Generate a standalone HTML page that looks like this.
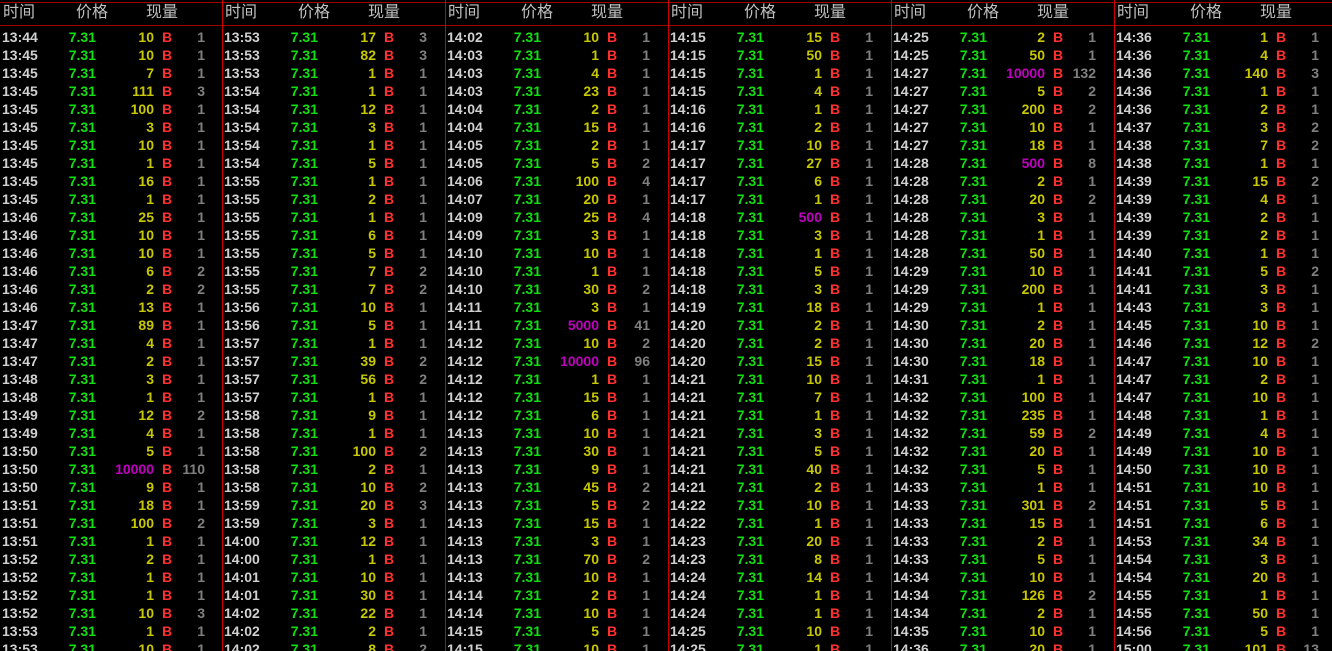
<!DOCTYPE html>
<html><head><meta charset="utf-8"><style>
*{margin:0;padding:0;box-sizing:border-box}
html,body{width:1332px;height:651px;overflow:hidden}
body{background:#000;position:relative;font-family:"Liberation Sans","Noto Sans CJK SC",sans-serif}
.t{position:absolute;left:0;width:1332px;height:1px;background:#a00000}
.v{position:absolute;top:0;width:1px;height:651px;background:#d00000;z-index:2}
.p{position:absolute;top:0;width:223px;height:651px;overflow:hidden}
.h{position:absolute;top:3px;font-size:16px;color:#c0c0c0;line-height:20px}
.rs{position:absolute;top:28px;left:0;width:223px}
p{position:relative;height:18px;font-size:14px;font-weight:bold;line-height:18px}
p a{position:absolute;left:2px;color:#d0d0d0}
p u{position:absolute;left:40px;width:56px;text-align:right;color:#10e010;text-decoration:none}
p b{position:absolute;left:90px;width:64px;text-align:right;color:#c8c800}
p b.m{color:#c000c0}
p em{position:absolute;left:162px;color:#ff3030;font-style:normal}
p s{position:absolute;left:170px;width:35px;text-align:right;color:#808080;text-decoration:none}
</style></head><body>
<div class="t" style="top:2px"></div>
<div class="t" style="top:25px"></div>
<div class="v" style="left:222px"></div>
<div class="v" style="left:445px"></div>
<div class="v" style="left:668px"></div>
<div class="v" style="left:891px"></div>
<div class="v" style="left:1114px"></div>

<div class="p" style="left:0">
<span class="h" style="left:3px">时间</span><span class="h" style="left:76px">价格</span><span class="h" style="left:146px">现量</span>
<div class="rs">
<p><a>13:44</a><u>7.31</u><b>10</b><em>B</em><s>1</s></p>
<p><a>13:45</a><u>7.31</u><b>10</b><em>B</em><s>1</s></p>
<p><a>13:45</a><u>7.31</u><b>7</b><em>B</em><s>1</s></p>
<p><a>13:45</a><u>7.31</u><b>111</b><em>B</em><s>3</s></p>
<p><a>13:45</a><u>7.31</u><b>100</b><em>B</em><s>1</s></p>
<p><a>13:45</a><u>7.31</u><b>3</b><em>B</em><s>1</s></p>
<p><a>13:45</a><u>7.31</u><b>10</b><em>B</em><s>1</s></p>
<p><a>13:45</a><u>7.31</u><b>1</b><em>B</em><s>1</s></p>
<p><a>13:45</a><u>7.31</u><b>16</b><em>B</em><s>1</s></p>
<p><a>13:45</a><u>7.31</u><b>1</b><em>B</em><s>1</s></p>
<p><a>13:46</a><u>7.31</u><b>25</b><em>B</em><s>1</s></p>
<p><a>13:46</a><u>7.31</u><b>10</b><em>B</em><s>1</s></p>
<p><a>13:46</a><u>7.31</u><b>10</b><em>B</em><s>1</s></p>
<p><a>13:46</a><u>7.31</u><b>6</b><em>B</em><s>2</s></p>
<p><a>13:46</a><u>7.31</u><b>2</b><em>B</em><s>2</s></p>
<p><a>13:46</a><u>7.31</u><b>13</b><em>B</em><s>1</s></p>
<p><a>13:47</a><u>7.31</u><b>89</b><em>B</em><s>1</s></p>
<p><a>13:47</a><u>7.31</u><b>4</b><em>B</em><s>1</s></p>
<p><a>13:47</a><u>7.31</u><b>2</b><em>B</em><s>1</s></p>
<p><a>13:48</a><u>7.31</u><b>3</b><em>B</em><s>1</s></p>
<p><a>13:48</a><u>7.31</u><b>1</b><em>B</em><s>1</s></p>
<p><a>13:49</a><u>7.31</u><b>12</b><em>B</em><s>2</s></p>
<p><a>13:49</a><u>7.31</u><b>4</b><em>B</em><s>1</s></p>
<p><a>13:50</a><u>7.31</u><b>5</b><em>B</em><s>1</s></p>
<p><a>13:50</a><u>7.31</u><b class="m">10000</b><em>B</em><s>110</s></p>
<p><a>13:50</a><u>7.31</u><b>9</b><em>B</em><s>1</s></p>
<p><a>13:51</a><u>7.31</u><b>18</b><em>B</em><s>1</s></p>
<p><a>13:51</a><u>7.31</u><b>100</b><em>B</em><s>2</s></p>
<p><a>13:51</a><u>7.31</u><b>1</b><em>B</em><s>1</s></p>
<p><a>13:52</a><u>7.31</u><b>2</b><em>B</em><s>1</s></p>
<p><a>13:52</a><u>7.31</u><b>1</b><em>B</em><s>1</s></p>
<p><a>13:52</a><u>7.31</u><b>1</b><em>B</em><s>1</s></p>
<p><a>13:52</a><u>7.31</u><b>10</b><em>B</em><s>3</s></p>
<p><a>13:53</a><u>7.31</u><b>1</b><em>B</em><s>1</s></p>
<p><a>13:53</a><u>7.31</u><b>10</b><em>B</em><s>1</s></p>
</div></div>

<div class="p" style="left:222px">
<span class="h" style="left:3px">时间</span><span class="h" style="left:76px">价格</span><span class="h" style="left:146px">现量</span>
<div class="rs">
<p><a>13:53</a><u>7.31</u><b>17</b><em>B</em><s>3</s></p>
<p><a>13:53</a><u>7.31</u><b>82</b><em>B</em><s>3</s></p>
<p><a>13:53</a><u>7.31</u><b>1</b><em>B</em><s>1</s></p>
<p><a>13:54</a><u>7.31</u><b>1</b><em>B</em><s>1</s></p>
<p><a>13:54</a><u>7.31</u><b>12</b><em>B</em><s>1</s></p>
<p><a>13:54</a><u>7.31</u><b>3</b><em>B</em><s>1</s></p>
<p><a>13:54</a><u>7.31</u><b>1</b><em>B</em><s>1</s></p>
<p><a>13:54</a><u>7.31</u><b>5</b><em>B</em><s>1</s></p>
<p><a>13:55</a><u>7.31</u><b>1</b><em>B</em><s>1</s></p>
<p><a>13:55</a><u>7.31</u><b>2</b><em>B</em><s>1</s></p>
<p><a>13:55</a><u>7.31</u><b>1</b><em>B</em><s>1</s></p>
<p><a>13:55</a><u>7.31</u><b>6</b><em>B</em><s>1</s></p>
<p><a>13:55</a><u>7.31</u><b>5</b><em>B</em><s>1</s></p>
<p><a>13:55</a><u>7.31</u><b>7</b><em>B</em><s>2</s></p>
<p><a>13:55</a><u>7.31</u><b>7</b><em>B</em><s>2</s></p>
<p><a>13:56</a><u>7.31</u><b>10</b><em>B</em><s>1</s></p>
<p><a>13:56</a><u>7.31</u><b>5</b><em>B</em><s>1</s></p>
<p><a>13:57</a><u>7.31</u><b>1</b><em>B</em><s>1</s></p>
<p><a>13:57</a><u>7.31</u><b>39</b><em>B</em><s>2</s></p>
<p><a>13:57</a><u>7.31</u><b>56</b><em>B</em><s>2</s></p>
<p><a>13:57</a><u>7.31</u><b>1</b><em>B</em><s>1</s></p>
<p><a>13:58</a><u>7.31</u><b>9</b><em>B</em><s>1</s></p>
<p><a>13:58</a><u>7.31</u><b>1</b><em>B</em><s>1</s></p>
<p><a>13:58</a><u>7.31</u><b>100</b><em>B</em><s>2</s></p>
<p><a>13:58</a><u>7.31</u><b>2</b><em>B</em><s>1</s></p>
<p><a>13:58</a><u>7.31</u><b>10</b><em>B</em><s>2</s></p>
<p><a>13:59</a><u>7.31</u><b>20</b><em>B</em><s>3</s></p>
<p><a>13:59</a><u>7.31</u><b>3</b><em>B</em><s>1</s></p>
<p><a>14:00</a><u>7.31</u><b>12</b><em>B</em><s>1</s></p>
<p><a>14:00</a><u>7.31</u><b>1</b><em>B</em><s>1</s></p>
<p><a>14:01</a><u>7.31</u><b>10</b><em>B</em><s>1</s></p>
<p><a>14:01</a><u>7.31</u><b>30</b><em>B</em><s>1</s></p>
<p><a>14:02</a><u>7.31</u><b>22</b><em>B</em><s>1</s></p>
<p><a>14:02</a><u>7.31</u><b>2</b><em>B</em><s>1</s></p>
<p><a>14:02</a><u>7.31</u><b>8</b><em>B</em><s>2</s></p>
</div></div>

<div class="p" style="left:445px">
<span class="h" style="left:3px">时间</span><span class="h" style="left:76px">价格</span><span class="h" style="left:146px">现量</span>
<div class="rs">
<p><a>14:02</a><u>7.31</u><b>10</b><em>B</em><s>1</s></p>
<p><a>14:03</a><u>7.31</u><b>1</b><em>B</em><s>1</s></p>
<p><a>14:03</a><u>7.31</u><b>4</b><em>B</em><s>1</s></p>
<p><a>14:03</a><u>7.31</u><b>23</b><em>B</em><s>1</s></p>
<p><a>14:04</a><u>7.31</u><b>2</b><em>B</em><s>1</s></p>
<p><a>14:04</a><u>7.31</u><b>15</b><em>B</em><s>1</s></p>
<p><a>14:05</a><u>7.31</u><b>2</b><em>B</em><s>1</s></p>
<p><a>14:05</a><u>7.31</u><b>5</b><em>B</em><s>2</s></p>
<p><a>14:06</a><u>7.31</u><b>100</b><em>B</em><s>4</s></p>
<p><a>14:07</a><u>7.31</u><b>20</b><em>B</em><s>1</s></p>
<p><a>14:09</a><u>7.31</u><b>25</b><em>B</em><s>4</s></p>
<p><a>14:09</a><u>7.31</u><b>3</b><em>B</em><s>1</s></p>
<p><a>14:10</a><u>7.31</u><b>10</b><em>B</em><s>1</s></p>
<p><a>14:10</a><u>7.31</u><b>1</b><em>B</em><s>1</s></p>
<p><a>14:10</a><u>7.31</u><b>30</b><em>B</em><s>2</s></p>
<p><a>14:11</a><u>7.31</u><b>3</b><em>B</em><s>1</s></p>
<p><a>14:11</a><u>7.31</u><b class="m">5000</b><em>B</em><s>41</s></p>
<p><a>14:12</a><u>7.31</u><b>10</b><em>B</em><s>2</s></p>
<p><a>14:12</a><u>7.31</u><b class="m">10000</b><em>B</em><s>96</s></p>
<p><a>14:12</a><u>7.31</u><b>1</b><em>B</em><s>1</s></p>
<p><a>14:12</a><u>7.31</u><b>15</b><em>B</em><s>1</s></p>
<p><a>14:12</a><u>7.31</u><b>6</b><em>B</em><s>1</s></p>
<p><a>14:13</a><u>7.31</u><b>10</b><em>B</em><s>1</s></p>
<p><a>14:13</a><u>7.31</u><b>30</b><em>B</em><s>1</s></p>
<p><a>14:13</a><u>7.31</u><b>9</b><em>B</em><s>1</s></p>
<p><a>14:13</a><u>7.31</u><b>45</b><em>B</em><s>2</s></p>
<p><a>14:13</a><u>7.31</u><b>5</b><em>B</em><s>2</s></p>
<p><a>14:13</a><u>7.31</u><b>15</b><em>B</em><s>1</s></p>
<p><a>14:13</a><u>7.31</u><b>3</b><em>B</em><s>1</s></p>
<p><a>14:13</a><u>7.31</u><b>70</b><em>B</em><s>2</s></p>
<p><a>14:13</a><u>7.31</u><b>10</b><em>B</em><s>1</s></p>
<p><a>14:14</a><u>7.31</u><b>2</b><em>B</em><s>1</s></p>
<p><a>14:14</a><u>7.31</u><b>10</b><em>B</em><s>1</s></p>
<p><a>14:15</a><u>7.31</u><b>5</b><em>B</em><s>1</s></p>
<p><a>14:15</a><u>7.31</u><b>10</b><em>B</em><s>1</s></p>
</div></div>

<div class="p" style="left:668px">
<span class="h" style="left:3px">时间</span><span class="h" style="left:76px">价格</span><span class="h" style="left:146px">现量</span>
<div class="rs">
<p><a>14:15</a><u>7.31</u><b>15</b><em>B</em><s>1</s></p>
<p><a>14:15</a><u>7.31</u><b>50</b><em>B</em><s>1</s></p>
<p><a>14:15</a><u>7.31</u><b>1</b><em>B</em><s>1</s></p>
<p><a>14:15</a><u>7.31</u><b>4</b><em>B</em><s>1</s></p>
<p><a>14:16</a><u>7.31</u><b>1</b><em>B</em><s>1</s></p>
<p><a>14:16</a><u>7.31</u><b>2</b><em>B</em><s>1</s></p>
<p><a>14:17</a><u>7.31</u><b>10</b><em>B</em><s>1</s></p>
<p><a>14:17</a><u>7.31</u><b>27</b><em>B</em><s>1</s></p>
<p><a>14:17</a><u>7.31</u><b>6</b><em>B</em><s>1</s></p>
<p><a>14:17</a><u>7.31</u><b>1</b><em>B</em><s>1</s></p>
<p><a>14:18</a><u>7.31</u><b class="m">500</b><em>B</em><s>1</s></p>
<p><a>14:18</a><u>7.31</u><b>3</b><em>B</em><s>1</s></p>
<p><a>14:18</a><u>7.31</u><b>1</b><em>B</em><s>1</s></p>
<p><a>14:18</a><u>7.31</u><b>5</b><em>B</em><s>1</s></p>
<p><a>14:18</a><u>7.31</u><b>3</b><em>B</em><s>1</s></p>
<p><a>14:19</a><u>7.31</u><b>18</b><em>B</em><s>1</s></p>
<p><a>14:20</a><u>7.31</u><b>2</b><em>B</em><s>1</s></p>
<p><a>14:20</a><u>7.31</u><b>2</b><em>B</em><s>1</s></p>
<p><a>14:20</a><u>7.31</u><b>15</b><em>B</em><s>1</s></p>
<p><a>14:21</a><u>7.31</u><b>10</b><em>B</em><s>1</s></p>
<p><a>14:21</a><u>7.31</u><b>7</b><em>B</em><s>1</s></p>
<p><a>14:21</a><u>7.31</u><b>1</b><em>B</em><s>1</s></p>
<p><a>14:21</a><u>7.31</u><b>3</b><em>B</em><s>1</s></p>
<p><a>14:21</a><u>7.31</u><b>5</b><em>B</em><s>1</s></p>
<p><a>14:21</a><u>7.31</u><b>40</b><em>B</em><s>1</s></p>
<p><a>14:21</a><u>7.31</u><b>2</b><em>B</em><s>1</s></p>
<p><a>14:22</a><u>7.31</u><b>10</b><em>B</em><s>1</s></p>
<p><a>14:22</a><u>7.31</u><b>1</b><em>B</em><s>1</s></p>
<p><a>14:23</a><u>7.31</u><b>20</b><em>B</em><s>1</s></p>
<p><a>14:23</a><u>7.31</u><b>8</b><em>B</em><s>1</s></p>
<p><a>14:24</a><u>7.31</u><b>14</b><em>B</em><s>1</s></p>
<p><a>14:24</a><u>7.31</u><b>1</b><em>B</em><s>1</s></p>
<p><a>14:24</a><u>7.31</u><b>1</b><em>B</em><s>1</s></p>
<p><a>14:25</a><u>7.31</u><b>10</b><em>B</em><s>1</s></p>
<p><a>14:25</a><u>7.31</u><b>1</b><em>B</em><s>1</s></p>
</div></div>

<div class="p" style="left:891px">
<span class="h" style="left:3px">时间</span><span class="h" style="left:76px">价格</span><span class="h" style="left:146px">现量</span>
<div class="rs">
<p><a>14:25</a><u>7.31</u><b>2</b><em>B</em><s>1</s></p>
<p><a>14:25</a><u>7.31</u><b>50</b><em>B</em><s>1</s></p>
<p><a>14:27</a><u>7.31</u><b class="m">10000</b><em>B</em><s>132</s></p>
<p><a>14:27</a><u>7.31</u><b>5</b><em>B</em><s>2</s></p>
<p><a>14:27</a><u>7.31</u><b>200</b><em>B</em><s>2</s></p>
<p><a>14:27</a><u>7.31</u><b>10</b><em>B</em><s>1</s></p>
<p><a>14:27</a><u>7.31</u><b>18</b><em>B</em><s>1</s></p>
<p><a>14:28</a><u>7.31</u><b class="m">500</b><em>B</em><s>8</s></p>
<p><a>14:28</a><u>7.31</u><b>2</b><em>B</em><s>1</s></p>
<p><a>14:28</a><u>7.31</u><b>20</b><em>B</em><s>2</s></p>
<p><a>14:28</a><u>7.31</u><b>3</b><em>B</em><s>1</s></p>
<p><a>14:28</a><u>7.31</u><b>1</b><em>B</em><s>1</s></p>
<p><a>14:28</a><u>7.31</u><b>50</b><em>B</em><s>1</s></p>
<p><a>14:29</a><u>7.31</u><b>10</b><em>B</em><s>1</s></p>
<p><a>14:29</a><u>7.31</u><b>200</b><em>B</em><s>1</s></p>
<p><a>14:29</a><u>7.31</u><b>1</b><em>B</em><s>1</s></p>
<p><a>14:30</a><u>7.31</u><b>2</b><em>B</em><s>1</s></p>
<p><a>14:30</a><u>7.31</u><b>20</b><em>B</em><s>1</s></p>
<p><a>14:30</a><u>7.31</u><b>18</b><em>B</em><s>1</s></p>
<p><a>14:31</a><u>7.31</u><b>1</b><em>B</em><s>1</s></p>
<p><a>14:32</a><u>7.31</u><b>100</b><em>B</em><s>1</s></p>
<p><a>14:32</a><u>7.31</u><b>235</b><em>B</em><s>1</s></p>
<p><a>14:32</a><u>7.31</u><b>59</b><em>B</em><s>2</s></p>
<p><a>14:32</a><u>7.31</u><b>20</b><em>B</em><s>1</s></p>
<p><a>14:32</a><u>7.31</u><b>5</b><em>B</em><s>1</s></p>
<p><a>14:33</a><u>7.31</u><b>1</b><em>B</em><s>1</s></p>
<p><a>14:33</a><u>7.31</u><b>301</b><em>B</em><s>2</s></p>
<p><a>14:33</a><u>7.31</u><b>15</b><em>B</em><s>1</s></p>
<p><a>14:33</a><u>7.31</u><b>2</b><em>B</em><s>1</s></p>
<p><a>14:33</a><u>7.31</u><b>5</b><em>B</em><s>1</s></p>
<p><a>14:34</a><u>7.31</u><b>10</b><em>B</em><s>1</s></p>
<p><a>14:34</a><u>7.31</u><b>126</b><em>B</em><s>2</s></p>
<p><a>14:34</a><u>7.31</u><b>2</b><em>B</em><s>1</s></p>
<p><a>14:35</a><u>7.31</u><b>10</b><em>B</em><s>1</s></p>
<p><a>14:36</a><u>7.31</u><b>20</b><em>B</em><s>1</s></p>
</div></div>

<div class="p" style="left:1114px">
<span class="h" style="left:3px">时间</span><span class="h" style="left:76px">价格</span><span class="h" style="left:146px">现量</span>
<div class="rs">
<p><a>14:36</a><u>7.31</u><b>1</b><em>B</em><s>1</s></p>
<p><a>14:36</a><u>7.31</u><b>4</b><em>B</em><s>1</s></p>
<p><a>14:36</a><u>7.31</u><b>140</b><em>B</em><s>3</s></p>
<p><a>14:36</a><u>7.31</u><b>1</b><em>B</em><s>1</s></p>
<p><a>14:36</a><u>7.31</u><b>2</b><em>B</em><s>1</s></p>
<p><a>14:37</a><u>7.31</u><b>3</b><em>B</em><s>2</s></p>
<p><a>14:38</a><u>7.31</u><b>7</b><em>B</em><s>2</s></p>
<p><a>14:38</a><u>7.31</u><b>1</b><em>B</em><s>1</s></p>
<p><a>14:39</a><u>7.31</u><b>15</b><em>B</em><s>2</s></p>
<p><a>14:39</a><u>7.31</u><b>4</b><em>B</em><s>1</s></p>
<p><a>14:39</a><u>7.31</u><b>2</b><em>B</em><s>1</s></p>
<p><a>14:39</a><u>7.31</u><b>2</b><em>B</em><s>1</s></p>
<p><a>14:40</a><u>7.31</u><b>1</b><em>B</em><s>1</s></p>
<p><a>14:41</a><u>7.31</u><b>5</b><em>B</em><s>2</s></p>
<p><a>14:41</a><u>7.31</u><b>3</b><em>B</em><s>1</s></p>
<p><a>14:43</a><u>7.31</u><b>3</b><em>B</em><s>1</s></p>
<p><a>14:45</a><u>7.31</u><b>10</b><em>B</em><s>1</s></p>
<p><a>14:46</a><u>7.31</u><b>12</b><em>B</em><s>2</s></p>
<p><a>14:47</a><u>7.31</u><b>10</b><em>B</em><s>1</s></p>
<p><a>14:47</a><u>7.31</u><b>2</b><em>B</em><s>1</s></p>
<p><a>14:47</a><u>7.31</u><b>10</b><em>B</em><s>1</s></p>
<p><a>14:48</a><u>7.31</u><b>1</b><em>B</em><s>1</s></p>
<p><a>14:49</a><u>7.31</u><b>4</b><em>B</em><s>1</s></p>
<p><a>14:49</a><u>7.31</u><b>10</b><em>B</em><s>1</s></p>
<p><a>14:50</a><u>7.31</u><b>10</b><em>B</em><s>1</s></p>
<p><a>14:51</a><u>7.31</u><b>10</b><em>B</em><s>1</s></p>
<p><a>14:51</a><u>7.31</u><b>5</b><em>B</em><s>1</s></p>
<p><a>14:51</a><u>7.31</u><b>6</b><em>B</em><s>1</s></p>
<p><a>14:53</a><u>7.31</u><b>34</b><em>B</em><s>1</s></p>
<p><a>14:54</a><u>7.31</u><b>3</b><em>B</em><s>1</s></p>
<p><a>14:54</a><u>7.31</u><b>20</b><em>B</em><s>1</s></p>
<p><a>14:55</a><u>7.31</u><b>1</b><em>B</em><s>1</s></p>
<p><a>14:55</a><u>7.31</u><b>50</b><em>B</em><s>1</s></p>
<p><a>14:56</a><u>7.31</u><b>5</b><em>B</em><s>1</s></p>
<p><a>15:00</a><u>7.31</u><b>101</b><em>B</em><s>13</s></p>
</div></div>
</body></html>
